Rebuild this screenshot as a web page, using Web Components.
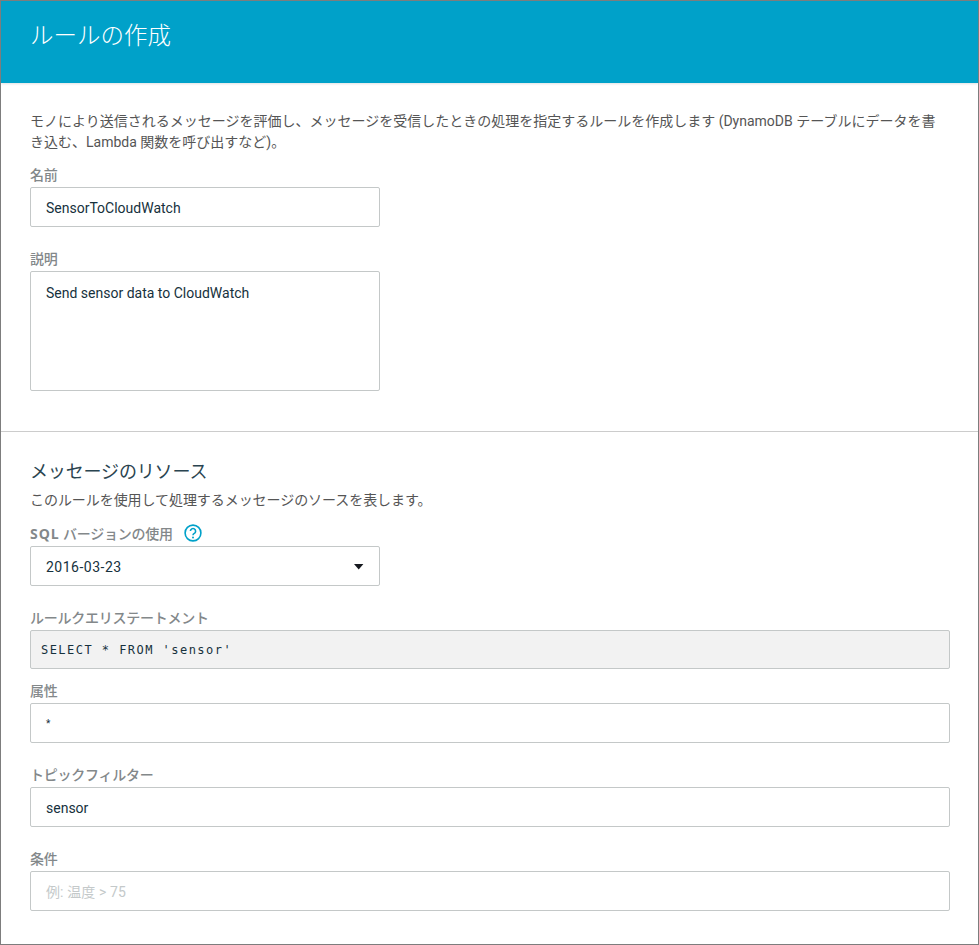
<!DOCTYPE html>
<html lang="ja">
<head>
<meta charset="utf-8">
<title>ルールの作成</title>
<style>
    html, body { margin: 0; background: #fff; }
    body {
        font-family: Roboto, "Noto Sans CJK JP", sans-serif;
        font-size: 14px;
        color: #555;
    }
</style>
</head>
<body>
<rule-page>
    <page-header slot="header">ルールの作成</page-header>

    <form-section>
        <p class="lead">モノにより送信されるメッセージを評価し、メッセージを受信したときの処理を指定するルールを作成します (DynamoDB テーブルにデータを書き込む、Lambda 関数を呼び出すなど)。</p>
        <form-field label="名前" gap="11" narrow>SensorToCloudWatch</form-field>
        <form-field label="説明" gap="21" narrow multiline>Send sensor data to CloudWatch</form-field>
    </form-section>

    <form-section divided>
        <section-title>メッセージのリソース</section-title>
        <p class="sub">このルールを使用して処理するメッセージのソースを表します。</p>
        <form-field label="<b>SQL</b> バージョンの使用" gap="13" narrow select help>2016-03-23</form-field>
        <form-field label="ルールクエリステートメント" gap="21" readonly>SELECT * FROM 'sensor'</form-field>
        <form-field label="属性" gap="11" small>*</form-field>
        <form-field label="トピックフィルター" gap="21">sensor</form-field>
        <form-field label="条件" gap="21" placeholder>例: 温度 &gt; 75</form-field>
    </form-section>
</rule-page>

<script>
const baseFont = `Roboto, "Noto Sans CJK JP", sans-serif`;

class RulePage extends HTMLElement {
    constructor() {
        super();
        this.attachShadow({mode: 'open'});
        this.shadowRoot.innerHTML = `
            <style>
                :host {
                    display: block;
                    box-sizing: border-box;
                    width: 979px;
                    height: 945px;
                    overflow: hidden;
                    border: 1px solid #7d7d7d;
                    background: #fff;
                }
            </style>
            <slot name="header"></slot>
            <slot></slot>
        `;
    }
}

class PageHeader extends HTMLElement {
    constructor() {
        super();
        this.attachShadow({mode: 'open'});
        this.shadowRoot.innerHTML = `
            <style>
                :host {
                    display: flex;
                    align-items: center;
                    box-sizing: border-box;
                    height: 82px;
                    padding: 0 29px 16px;
                    background: #00a1c9;
                    color: #fff;
                    font: 300 23.5px ${baseFont};
                    box-shadow: 0 1px 2px rgba(0, 28, 36, .12);
                }
            </style>
            <slot></slot>
        `;
    }
}

class FormSection extends HTMLElement {
    constructor() {
        super();
        this.attachShadow({mode: 'open'});
        this.shadowRoot.innerHTML = `
            <style>
                :host {
                    display: flex;
                    flex-direction: column;
                    padding: 28px 28px 40px 29px;
                }
                :host([divided]) {
                    border-top: 1px solid #ccc;
                    padding-top: 27px;
                    padding-bottom: 0;
                }
                ::slotted(p) {
                    margin: 0;
                    font-size: 14px;
                    line-height: 21px;
                    color: #555;
                }
                ::slotted(p.lead) {
                    padding-right: 8px;
                }
                ::slotted(p.sub) {
                    margin-top: 5px;
                    line-height: 20px;
                    letter-spacing: -.06px;
                }
            </style>
            <slot></slot>
        `;
    }
}

class SectionTitle extends HTMLElement {
    constructor() {
        super();
        this.attachShadow({mode: 'open'});
        this.shadowRoot.innerHTML = `
            <style>
                :host {
                    display: block;
                    font: 400 18px/26px ${baseFont};
                    letter-spacing: -.15px;
                    color: #2a4450;
                }
            </style>
            <slot></slot>
        `;
    }
}

class FormField extends HTMLElement {
    constructor() {
        super();
        this.attachShadow({mode: 'open'});

        const label = this.getAttribute('label') || '';
        const gap = this.getAttribute('gap') || '0';
        const help = this.hasAttribute('help') ? `
            <svg class="help" width="18" height="18" viewBox="0 0 18 18">
                <circle cx="9" cy="9" r="7.9" fill="none" stroke="#00a1c9" stroke-width="1.6"/>
                <path d="M6.4 7.1a2.6 2.6 0 1 1 3.9 2.3c-.9.5-1.3 1-1.3 1.9" fill="none" stroke="#00a1c9" stroke-width="1.6"/>
                <circle cx="9" cy="13.4" r="1" fill="#00a1c9"/>
            </svg>` : '';
        const caret = this.hasAttribute('select') ? `
            <svg class="caret" width="10" height="6" viewBox="0 0 10 6"><path d="M0 0h9.4L4.7 5.4z" fill="#16191f"/></svg>` : '';

        this.shadowRoot.innerHTML = `
            <style>
                :host {
                    display: block;
                    margin-top: ${gap}px;
                    font-family: ${baseFont};
                }
                .label {
                    display: flex;
                    align-items: center;
                    gap: 11px;
                    height: 20px;
                    margin-bottom: 3px;
                    font-size: 14px;
                    font-weight: 500;
                    letter-spacing: -.25px;
                    color: #83888a;
                }
                .label b {
                    font-family: "Open Sans", sans-serif;
                    font-weight: 700;
                    letter-spacing: 1px;
                }
                .box {
                    display: flex;
                    align-items: center;
                    justify-content: space-between;
                    box-sizing: border-box;
                    height: 40px;
                    padding: 1px 15px 0;
                    border: 1px solid #c4c8c8;
                    border-radius: 2px;
                    background: #fff;
                    font-size: 14px;
                    color: #16313d;
                }
                :host([narrow]) .box { width: 350px; }
                :host([multiline]) .box {
                    align-items: flex-start;
                    height: 120px;
                    padding-top: 12px;
                    line-height: 18px;
                }
                :host([select]) .box { letter-spacing: .5px; }
                :host([readonly]) .box {
                    height: 39px;
                    padding: 0 10px;
                    background: #f2f2f2;
                    font-family: "DejaVu Sans Mono", monospace;
                    font-size: 12px;
                    letter-spacing: 1.46px;
                }
                :host([small]) .box { font-size: 10px; }
                :host([placeholder]) .box { padding-top: 0; color: #c4c9ca; letter-spacing: .1px; }
                .help { flex: none; }
                .caret { flex: none; margin-top: 1px; }
            </style>
            <div class="label"><span>${label}</span>${help}</div>
            <div class="box"><span><slot></slot></span>${caret}</div>
        `;
    }
}

customElements.define('rule-page', RulePage);
customElements.define('page-header', PageHeader);
customElements.define('form-section', FormSection);
customElements.define('section-title', SectionTitle);
customElements.define('form-field', FormField);
</script>
</body>
</html>
